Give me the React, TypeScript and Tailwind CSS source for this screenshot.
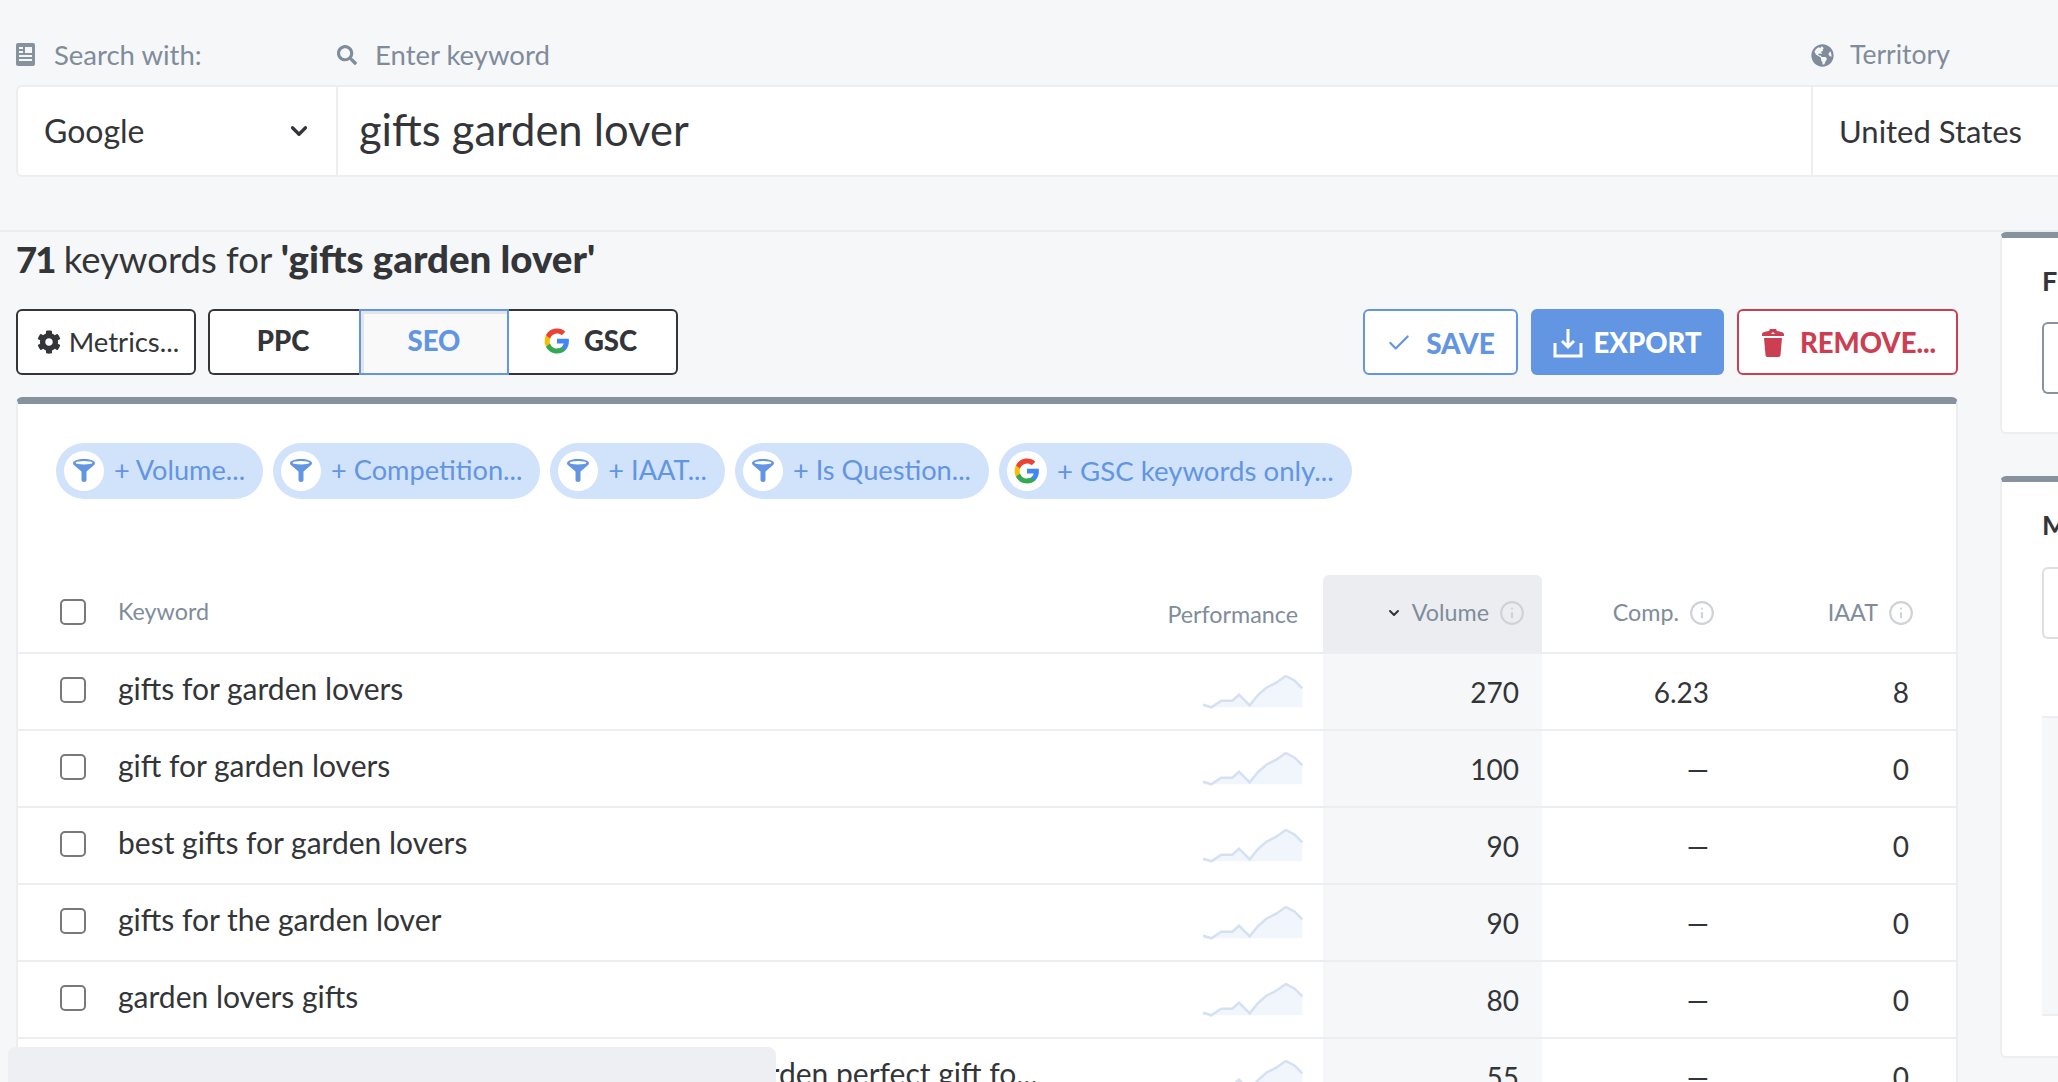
import React from 'react';
import { Check, ChevronDown, Info } from 'lucide-react';
import { FaCog, FaGlobeAmericas, FaSearch } from 'react-icons/fa';

const rows = [
  { keyword: 'gifts for garden lovers', volume: '270', comp: '6.23', iaat: '8' },
  { keyword: 'gift for garden lovers', volume: '100', comp: '—', iaat: '0' },
  { keyword: 'best gifts for garden lovers', volume: '90', comp: '—', iaat: '0' },
  { keyword: 'gifts for the garden lover', volume: '90', comp: '—', iaat: '0' },
  { keyword: 'garden lovers gifts', volume: '80', comp: '—', iaat: '0' },
  { keyword: 'gifts for garden lovers unique gifts for lovers of garden perfect gift fo...', volume: '55', comp: '—', iaat: '0' },
];

const pills = ['+ Volume...', '+ Competition...', '+ IAAT...', '+ Is Question...'];

function GoogleG({ size = 24 }: { size?: number }) {
  return (
    <svg width={size} height={size} viewBox="0 0 24 24" className="shrink-0">
      <path fill="#4285F4" d="M23 12.3c0-.8-.1-1.600-.2-2.300H12v4.400h6.200c-.3 1.400-1.100 2.600-2.300 3.400v2.900h3.700c2.200-2 3.400-5 3.400-8.400z" />
      <path fill="#34A853" d="M12 23.500c3.100 0 5.700-1 7.600-2.800l-3.700-2.900c-1 .7-2.400 1.100-3.900 1.100-3 0-5.500-2-6.400-4.700H1.800v3c1.900 3.800 5.800 6.300 10.200 6.300z" />
      <path fill="#FBBC05" d="M5.600 14.200c-.5-1.400-.5-3 0-4.400v-3H1.800c-1.600 3.200-1.600 7.200 0 10.400l3.800-3z" />
      <path fill="#EA4335" d="M12 5.100c1.700 0 3.200.6 4.400 1.700l3.300-3.300C17.700 1.600 15.100.5 12 .5 7.600.5 3.700 3 1.800 6.800l3.800 3C6.500 7.100 9 5.100 12 5.100z" />
    </svg>
  );
}

function Funnel() {
  return (
    <svg width="22" height="23" viewBox="0 0 22 23" className="shrink-0">
      <path fill="#6295e2" d="M0 4c0-2.200 5-4 11-4s11 1.800 11 4c0 1.200-.8 2.200-2 3l-6.500 5.500V21c0 1.200-1 2-2.500 2s-2.500-.8-2.500-2v-8.500L2 7C.8 6.200 0 5.200 0 4z" />
      <ellipse cx="11" cy="3.800" rx="8.500" ry="1.700" fill="#ffffff" />
    </svg>
  );
}

function Sparkline() {
  return (
    <svg width="100" height="34" viewBox="0 0 100 34" className="shrink-0">
      <path fill="#f1f5fc" d="M0 29.700L8.300 32.300 18.300 25.700H29.300L36 19.700 46.700 30.300 55 20 63.300 12.700 73.300 7.700 82.700 1 91.700 5.700 99.300 13.300V32.300H0z" />
      <path fill="none" stroke="#d5e0f3" strokeWidth="2.500" d="M0 29.700L8.300 32.300 18.300 25.700H29.300L36 19.700 46.700 30.300 55 20 63.300 12.700 73.300 7.700 82.700 1 91.700 5.700 99.300 13.300" />
    </svg>
  );
}

function Box() {
  return <span className="block h-[26px] w-[26px] shrink-0 rounded-[5px] border-2 border-[#77797c] bg-white" />;
}

function HeadInfo() {
  return <Info className="h-[26px] w-[26px] shrink-0 text-[#cfd2d6]" strokeWidth={2} />;
}

export default function App() {
  return (
    <div className="relative h-[1082px] w-[2058px] overflow-hidden bg-[#f6f7f9] font-['Lato',sans-serif] text-[#333538]">
      <div className="h-[232px] border-b-2 border-[#ecedf0] pl-[16px]">
        <div className="flex h-[85px] items-center pt-[24px] text-[27.500px] text-[#7f8c9b]">
          <div className="flex w-[321px] items-center gap-[19px]">
            <svg width="19" height="23" viewBox="0 0 19 23" className="shrink-0">
              <rect width="19" height="23" rx="2" fill="#87929f" />
              <rect x="9" y="4" width="7" height="6" fill="#f6f7f9" />
              <path stroke="#f6f7f9" strokeWidth="2" d="M3 5h4M3 9h4M3 13h13M3 17h13" />
            </svg>
            <span>Search with:</span>
          </div>
          <div className="flex flex-1 items-center gap-[18px]">
            <FaSearch className="h-[20px] w-[20px]" />
            <span>Enter keyword</span>
          </div>
          <div className="flex w-[247px] items-center gap-[16px] pt-[1px] text-[26.500px]">
            <FaGlobeAmericas className="h-[23px] w-[23px]" />
            <span>Territory</span>
          </div>
        </div>
        <div className="flex h-[92px] rounded-l-[6px] border-y-2 border-l-2 border-[#eceef1] bg-white">
          <div className="flex w-[320px] items-center justify-between border-r-2 border-[#eceef1] pl-[26px] pr-[24px] text-[32px]">
            <span>Google</span>
            <ChevronDown className="h-[26px] w-[26px]" strokeWidth={3} />
          </div>
          <div className="flex flex-1 items-center pb-[2px] pl-[21px] text-[43.500px]">gifts garden lover</div>
          <div className="flex w-[247px] items-center border-l-2 border-[#eceef1] pl-[26px] text-[31px]">United States</div>
        </div>
      </div>

      <div className="flex">
        <div className="w-[1958px] shrink-0 pl-[16px]">
          <div className="flex h-[57px] items-center pb-[3px] text-[36.500px]">
            <span><b className="font-black tracking-[-2px]">71</b> keywords for <b className="text-[38.500px] font-black">'gifts garden lover'</b></span>
          </div>
          <div className="mt-[20px] flex justify-between">
            <div className="flex gap-[12px]">
              <button className="flex h-[66px] w-[180px] items-center justify-center gap-[8px] rounded-[6px] border-2 border-[#333538] bg-white pl-[4px] text-[27.500px]">
                <FaCog className="h-[24px] w-[24px]" />
                Metrics...
              </button>
              <div className="flex h-[66px]">
                <button className="w-[151px] rounded-l-[6px] border-2 border-r-0 border-[#333538] bg-white pb-[2px] pr-[3px] text-[27.500px] font-black">PPC</button>
                <button className="w-[150px] border-2 border-[#6295e2] bg-[#f9f9fa] pb-[2px] text-[27.500px] font-black text-[#6295e2] shadow-[inset_3px_3px_0_#e4e5e7]">SEO</button>
                <button className="flex w-[169px] items-center justify-center gap-[14px] rounded-r-[6px] border-2 border-l-0 border-[#333538] bg-white pb-[2px] pr-[4px] text-[27.500px] font-black">
                  <GoogleG size={26} />
                  GSC
                </button>
              </div>
            </div>
            <div className="flex gap-[13px]">
              <button className="flex h-[66px] w-[155px] items-center justify-center gap-[14px] rounded-[6px] border-2 border-[#6295e2] bg-white pt-[1px] text-[28px] font-black text-[#6295e2]">
                <Check className="h-[26px] w-[26px]" strokeWidth={2} />
                SAVE
              </button>
              <button className="flex h-[66px] w-[193px] items-center justify-center gap-[10px] rounded-[6px] bg-[#6295e2] pt-[1px] text-[27.500px] font-black text-white">
                <svg width="30" height="30" viewBox="0 0 30 30" className="shrink-0">
                  <path fill="none" stroke="#ffffff" strokeWidth="3" d="M2 15v13h26V15M15 1v18M9 13l6 6 6-6" />
                </svg>
                EXPORT
              </button>
              <button className="flex h-[66px] w-[221px] items-center justify-center gap-[16px] rounded-[6px] border-2 border-[#cc3f53] bg-white pl-[3px] pt-[1px] text-[27.500px] font-black text-[#cc3f53]">
                <svg width="22" height="28" viewBox="0 0 22 28" className="shrink-0">
                  <path fill="#cc3f53" d="M2 9h18l-1.500 17c-.1 1-.8 2-2 2h-11c-1.200 0-1.900-1-2-2zM0 5c0-1.500 3-2.500 7-3l1-2h6l1 2c4 .5 7 1.500 7 3v2H0z" />
                  <path fill="#ffffff" d="M9 5l2-2 2 2z" />
                </svg>
                REMOVE...
              </button>
            </div>
          </div>

          <div className="mt-[22px] h-[700px] overflow-hidden rounded-t-[6px] border-x-2 border-t-[7px] border-[#87929f] border-x-[#eceef1] bg-white">
            <div className="flex h-[171px] items-start gap-[10px] pl-[38px] pt-[39px] text-[27.200px] text-[#6295e2]">
              {pills.map((pill) => (
                <div key={pill} className="flex h-[56px] items-center gap-[10px] rounded-full bg-[#d1e2fb] pb-[1px] pl-[8px] pr-[18px]">
                  <span className="flex h-[40px] w-[40px] items-center justify-center rounded-full bg-white"><Funnel /></span>
                  {pill}
                </div>
              ))}
              <div className="flex h-[56px] items-center gap-[10px] rounded-full bg-[#d1e2fb] pb-[1px] pl-[8px] pr-[18px]">
                <span className="flex h-[40px] w-[40px] items-center justify-center rounded-full bg-white"><GoogleG size={26} /></span>
                <span className="text-[27.600px]">+ GSC keywords only...</span>
              </div>
            </div>

            <div className="flex h-[79px] border-b-2 border-[#eceef1] text-[23.300px] text-[#7f8c9b]">
              <div className="flex flex-1 items-center gap-[32px] pb-[4px] pl-[42px]">
                <Box />
                <span>Keyword</span>
              </div>
              <div className="flex items-center pr-[25px] pt-[2px]">Performance</div>
              <div className="flex w-[219px] items-center justify-end gap-[10px] rounded-t-[6px] bg-[#ecedf1] pb-[2px] pr-[17px]">
                <ChevronDown className="h-[16px] w-[16px] text-[#333538]" strokeWidth={3} />
                <span>Volume</span>
                <HeadInfo />
              </div>
              <div className="flex w-[210px] items-center justify-end gap-[10px] pb-[2px] pr-[37px]">
                <span>Comp.</span>
                <HeadInfo />
              </div>
              <div className="flex w-[204px] items-center justify-end gap-[10px] pb-[2px] pr-[42px]">
                <span>IAAT</span>
                <HeadInfo />
              </div>
            </div>

            {rows.map((row) => (
              <div key={row.keyword} className="flex h-[77px] border-b-2 border-[#eceef1] text-[30px]">
                <div className="flex min-w-0 flex-1 items-center gap-[32px] pb-[4px] pl-[42px]">
                  <Box />
                  <span className="-translate-y-[1px] whitespace-nowrap">{row.keyword}</span>
                </div>
                <div className="flex items-center pr-[20px] pt-[1px]"><Sparkline /></div>
                <div className="flex w-[219px] items-center justify-end bg-[#f6f7f9] pr-[23px] text-[28px]">{row.volume}</div>
                <div className="flex w-[210px] items-center justify-end pr-[43px] text-[28px]">{row.comp}</div>
                <div className="flex w-[204px] items-center justify-end pr-[47px] text-[28px]">{row.iaat}</div>
              </div>
            ))}
          </div>
        </div>

        <div className="min-w-0 flex-1 pl-[42px]">
          <div className="h-[202px] overflow-hidden rounded-l-[6px] border-b-2 border-l-2 border-t-[6px] border-[#eceef1] border-t-[#87929f] bg-white pl-[40px] pt-[28px]">
            <div className="h-[30px] text-[27px] font-bold leading-[30px]">Fi</div>
            <div className="mt-[26px] h-[72px] rounded-l-[6px] border-2 border-r-0 border-[#87929f] bg-white" />
          </div>
          <div className="mt-[42px] h-[582px] overflow-hidden rounded-l-[6px] border-b-2 border-l-2 border-t-[6px] border-[#eceef1] border-t-[#87929f] bg-white pl-[40px] pt-[28px]">
            <div className="h-[30px] text-[27px] font-bold leading-[30px]">M</div>
            <div className="mt-[27px] h-[72px] rounded-l-[6px] border-2 border-r-0 border-[#dcdee2] bg-white" />
            <div className="mt-[77px] h-[300px] border-y-2 border-[#eceef1] bg-[#f6f7f9]" />
          </div>
        </div>
      </div>

      {/* toast placeholder sitting over the table */}
      <div className="absolute bottom-0 left-[8px] h-[35px] w-[768px] rounded-t-[8px] bg-[#edeff3]" />
    </div>
  );
}
